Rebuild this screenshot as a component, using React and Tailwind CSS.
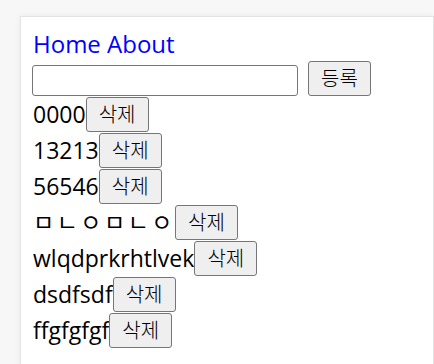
import React, { useState } from "react";

const initialItems = ["0000", "13213", "56546", "ㅁㄴㅇㅁㄴㅇ", "wlqdprkrhtlvek", "dsdfsdf", "ffgfgfgf"];

const App = () => {
    const [items, setItems] = useState(initialItems);
    const [text, setText] = useState("");

    const addItem = () => {
        if (!text) return;
        setItems([...items, text]);
        setText("");
    };

    const removeItem = (idx) => setItems(items.filter((_, i) => i !== idx));

    const isHangul = (s) => /[\u3131-\u318e\uac00-\ud7a3]/.test(s);

    return (
        <div className="w-[434px] h-[364px] overflow-hidden bg-[#f7f7f7] pt-[16px] pl-[20px]" style={{ fontFamily: "'Open Sans', 'Noto Sans CJK KR', sans-serif" }}>
            <div className="h-[400px] bg-white border border-[#e4e4e4] shadow-[0_0_6px_rgba(0,0,0,0.06)] pt-[11px] pl-[11px] text-[23px] text-black">
                {/* Nav */}
                <nav className="h-[33px] leading-[32px] pl-[1px] text-[24px]">
                    <a href="#" className="text-[#0000ff]">Home</a>{" "}
                    <a href="#" className="text-[#0000ff]">About</a>
                </nav>

                {/* Input row */}
                <div className="flex items-end h-[36px] pb-[1px]">
                    <input
                        value={text}
                        onChange={(e) => setText(e.target.value)}
                        className="w-[266px] h-[31px] border border-[#767676] rounded-[3px] bg-white outline-none px-1 text-[16px]"
                    />
                    <button onClick={addItem} className="ml-[10px] h-[35px] w-[63px] border border-[#767676] rounded-[3px] bg-[#efefef] text-[20px] font-light leading-none">등록</button>
                </div>

                {/* List */}
                {items.map((item, idx) => (
                    <div key={idx} className="flex items-start h-[36px] pl-[1px]">
                        <span className={isHangul(item) ? "leading-[35px] tracking-[2.5px]" : "leading-[35px]"}>{item}</span>
                        <button onClick={() => removeItem(idx)} className="h-[35px] w-[63px] border border-[#767676] rounded-[3px] bg-[#efefef] text-[20px] font-light leading-none">삭제</button>
                    </div>
                ))}
            </div>
        </div>
    );
};

export default App;
